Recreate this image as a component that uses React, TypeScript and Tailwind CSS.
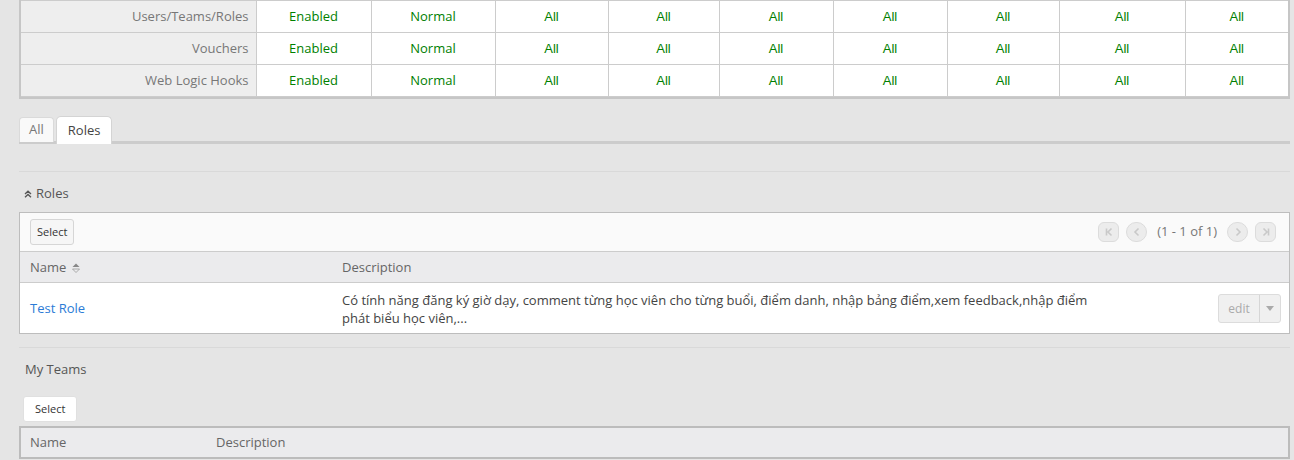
import React from "react";

const cols = [235, 115, 124, 113, 111, 114, 114, 112, 126, 103];
const rows = ["Users/Teams/Roles", "Vouchers", "Web Logic Hooks"];

const SortIcon = () => (
  <svg width="8" height="10" viewBox="0 0 8 10" className="inline-block ml-1.5">
    <path d="M4 0.5 L7.5 4 L0.5 4 Z" fill="#888" />
    <path d="M4 9.5 L7.5 6 L0.5 6 Z" fill="none" stroke="#999" strokeWidth="0.8" />
  </svg>
);

const DoubleUp = () => (
  <svg width="8" height="8" viewBox="0 0 8 8" className="mr-[4px]">
    <path d="M1 4 L4 1.2 L7 4 M1 7.2 L4 4.4 L7 7.2" fill="none" stroke="#555" strokeWidth="1.3" />
  </svg>
);

const PagerBtn = ({ d, pill }: { d: string; pill?: boolean }) => (
  <span
    className={
      "inline-flex items-center justify-center h-5 border border-[#dcdcdc] bg-[#ececec] " +
      (pill ? "w-[21px] rounded-[6px]" : "w-[21px] rounded-full")
    }
  >
    <svg width="12" height="12" viewBox="0 0 12 12">
      <path d={d} fill="none" stroke="#c9c9c9" strokeWidth="1.6" />
    </svg>
  </span>
);

export default function App() {
  return (
    <div className="min-h-[460px] bg-[#e5e5e5] pl-[19px] pr-[4px] font-['Open_Sans',sans-serif] text-[13px] text-[#555]">
      {/* Module access table */}
      <div className="border-2 border-t-0 border-[#c6c6c6]">
        <table className="w-full border-collapse table-fixed">
          <colgroup>
            {cols.map((w, i) => (
              <col key={i} style={{ width: w }} />
            ))}
          </colgroup>
          <tbody>
            {rows.map((r) => (
              <tr key={r} className="h-[32px]">
                <td className="border border-[#ccc] border-l-0 bg-[#eeeeee] text-right pr-[7px] pt-[1px] text-[#777]">{r}</td>
                <td className="border border-[#ccc] bg-white text-center pt-[1px] text-[#008000]">Enabled</td>
                <td className="border border-[#ccc] bg-white text-center pt-[1px] text-[#008000]">Normal</td>
                {Array.from({ length: 7 }).map((_, i) => (
                  <td
                    key={i}
                    className="border border-[#ccc] last:border-r-0 bg-white text-center pt-[1px] text-[#008000] font-['Liberation_Sans',Arial,sans-serif]"
                  >
                    All
                  </td>
                ))}
              </tr>
            ))}
          </tbody>
        </table>
      </div>

      {/* Tabs */}
      <div className="mt-[18px] flex items-end border-b-[3px] border-[#cccccc] h-[27px]">
        <div className="h-[25px] px-[9px] flex items-center bg-[#f9f9f9] border border-[#dadada] border-b-0 rounded-t-[4px] text-[13px] text-[#777] mb-[-1px]">
          All
        </div>
        <div className="ml-[2px] h-[28px] px-[11px] flex items-center bg-white border border-[#d4d4d4] border-b-0 rounded-t-[5px] text-[13px] text-[#444] mb-[-3px]">
          Roles
        </div>
      </div>

      <div className="mt-[27px] border-t border-[#d9d9d9]" />

      {/* Roles subpanel */}
      <div className="h-[40px] pt-[4px] flex items-center pl-[5px] text-[13px] text-[#555]">
        <DoubleUp />
        Roles
      </div>

      <div className="border border-[#bdbdbd] bg-white">
        <div className="h-[38px] bg-[#fafafa] flex items-center justify-between px-[10px]">
          <button className="h-[26px] px-[6px] border border-[#d6d6d6] rounded-[3px] bg-[#f6f6f6] text-[11px] text-[#333]">
            Select
          </button>
          <div className="flex items-center gap-[7px] pr-[3px]">
            <PagerBtn pill d="M3.5 2.5 V9.5 M8.5 2.5 L5 6 L8.5 9.5" />
            <PagerBtn d="M7.5 2.5 L4 6 L7.5 9.5" />
            <span className="px-[3px] text-[13px] text-[#777]">(1 - 1 of 1)</span>
            <PagerBtn d="M4.5 2.5 L8 6 L4.5 9.5" />
            <PagerBtn pill d="M8.5 2.5 V9.5 M3.5 2.5 L7 6 L3.5 9.5" />
          </div>
        </div>
        <div className="h-[32px] pt-[1px] flex items-center bg-[#ebebed] border-y border-[#cccccc] text-[#666]">
          <div className="w-[322px] pl-[10px] flex items-center">
            Name
            <SortIcon />
          </div>
          <div>Description</div>
        </div>
        <div className="h-[50px] pt-[1px] flex items-center">
          <div className="w-[322px] pl-[10px] text-[#2b7bd6] text-[13px]">Test Role</div>
          <div className="w-[770px] text-[13px] leading-[18px] text-[#444]">
            Có tính năng đăng ký giờ dạy, comment từng học viên cho từng buổi, điểm danh, nhập bảng điểm,xem feedback,nhập điểm phát biểu học viên,...
          </div>
          <div className="ml-auto mr-[8px] flex h-[29px] border border-[#dcdcdc] rounded-[3px] bg-[#f0f0f0]">
            <span className="w-[41px] flex items-center justify-center text-[12px] text-[#aaa] border-r border-[#d6d6d6]">edit</span>
            <span className="w-[20px] flex items-center justify-center">
              <svg width="8" height="5" viewBox="0 0 8 5">
                <path d="M0 0 L8 0 L4 5 Z" fill="#aaa" />
              </svg>
            </span>
          </div>
        </div>
      </div>

      <div className="mt-[13px] border-t border-[#d9d9d9]" />

      {/* My Teams */}
      <div className="h-[44px] flex items-center pl-[6px] text-[13px] text-[#555]">My Teams</div>
      <div className="pl-[4px] mt-[4px]">
        <button className="h-[26px] px-[11px] border border-[#e0e0e0] rounded-[3px] bg-white text-[11px] text-[#333]">
          Select
        </button>
      </div>
      <div className="mt-[4px] h-[33px] flex items-center border-2 border-[#bcbcbc] bg-[#ebebed] text-[#666]">
        <div className="w-[195px] pl-[9px]">Name</div>
        <div>Description</div>
      </div>
    </div>
  );
}
